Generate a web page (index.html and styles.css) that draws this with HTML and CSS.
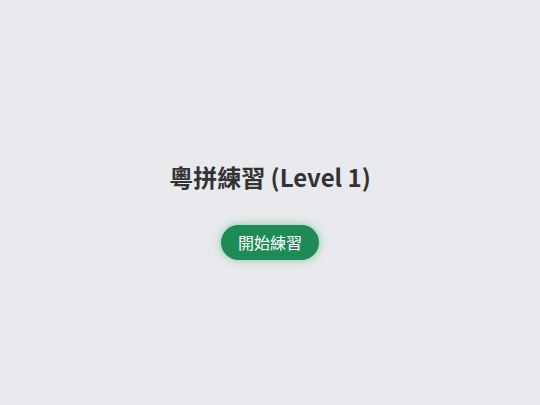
FILE: index.html
```html
<!DOCTYPE html>
<html lang="zh-Hant">
<head>
<meta charset="utf-8">
<link rel="stylesheet" href="styles.css">
</head>
<body>
<main class="screen">
  <h1 class="title">粵拼練習 (Level 1)</h1>
  <button class="start">開始練習</button>
</main>
</body>
</html>
```
FILE: styles.css
```css
html, body {
  margin: 0;
  padding: 0;
  height: 100%;
}
body {
  background: #e9eaed;
  font-family: "Noto Sans CJK TC", "Noto Sans", sans-serif;
}
.screen {
  box-sizing: border-box;
  height: 100%;
  padding-top: 14px;
  display: flex;
  flex-direction: column;
  align-items: center;
  justify-content: center;
}
.title {
  margin: 0 0 30px;
  font-size: 24px;
  line-height: 36px;
  font-weight: 700;
  color: #333333;
}
.start {
  border: none;
  border-radius: 18px;
  background: #1e8a55;
  color: #ffffff;
  font-family: inherit;
  font-size: 16px;
  line-height: 19px;
  padding: 8px 17px;
  box-shadow: 0 0 8px rgba(30, 170, 90, 0.5);
  cursor: pointer;
}
```
